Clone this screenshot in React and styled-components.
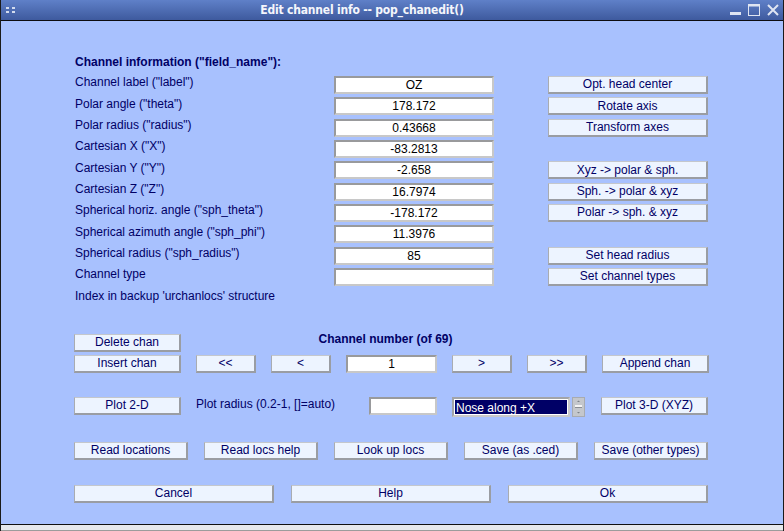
import styled, { createGlobalStyle } from 'styled-components';

const GlobalStyle = createGlobalStyle`
body {
    margin: 0;
    background: #a8c1fe;
    font-family: "Liberation Sans", Arial, sans-serif;
}
`;

const fields = [
    ['Channel label ("label")', 'OZ'],
    ['Polar angle ("theta")', '178.172'],
    ['Polar radius ("radius")', '0.43668'],
    ['Cartesian X ("X")', '-83.2813'],
    ['Cartesian Y ("Y")', '-2.658'],
    ['Cartesian Z ("Z")', '16.7974'],
    ['Spherical horiz. angle ("sph_theta")', '-178.172'],
    ['Spherical azimuth angle ("sph_phi")', '11.3976'],
    ['Spherical radius ("sph_radius")', '85'],
    ['Channel type', ''],
    ["Index in backup 'urchanlocs' structure", null],
];

// right column buttons, by row (null = empty row)
const sideButtons = [
    'Opt. head center', 'Rotate axis', 'Transform axes', null,
    'Xyz -> polar & sph.', 'Sph. -> polar & xyz', 'Polar -> sph. & xyz', null,
    'Set head radius', 'Set channel types', null,
];

const App = () => {
    return (
        <>
        <GlobalStyle />
        <Window>
            <TitleBar>
                <Grip>
                    <span /><span /><span /><span />
                </Grip>
                <Title>Edit channel info -- pop_chanedit()</Title>
                <WinControls>
                    <svg width="12" height="12" viewBox="0 0 12 12">
                        <rect x="1" y="8" width="11" height="3" fill="#dfe5f2" />
                    </svg>
                    <svg width="12" height="12" viewBox="0 0 12 12">
                        <rect x="0.5" y="0.5" width="11" height="11" fill="none" stroke="#dfe5f2" />
                        <rect x="0.5" y="0.5" width="11" height="2" fill="#dfe5f2" />
                    </svg>
                    <svg width="12" height="12" viewBox="0 0 12 12">
                        <path d="M1 1 L11 11 M11 1 L1 11" stroke="#dfe5f2" strokeWidth="2" />
                    </svg>
                </WinControls>
            </TitleBar>

            <Body>
                <InfoGrid>
                    <Header>Channel information ("field_name"):</Header>
                    {fields.map(([label, value], i) => (
                        <Row key={label}>
                            <Label>{label}</Label>
                            {value !== null ? <Edit value={value} readOnly /> : <span />}
                            <span />
                            {sideButtons[i] ? <Button>{sideButtons[i]}</Button> : <span />}
                        </Row>
                    ))}
                </InfoGrid>

                <NavGrid>
                    <Button>Delete chan</Button>
                    <NavTitle>Channel number (of 69)</NavTitle>
                    <span />
                    <Button>Insert chan</Button>
                    <Button>&lt;&lt;</Button>
                    <Button>&lt;</Button>
                    <Edit value="1" readOnly />
                    <Button>&gt;</Button>
                    <Button>&gt;&gt;</Button>
                    <Button>Append chan</Button>
                </NavGrid>

                <PlotRow>
                    <Button $w={107}>Plot 2-D</Button>
                    <PlotText>Plot radius (0.2-1, []=auto)</PlotText>
                    <Edit $w={68} value="" readOnly />
                    <Select>
                        <SelectBox>Nose along +X</SelectBox>
                        <Spinner>
                            <svg width="9" height="16" viewBox="0 0 9 16">
                                <path d="M3 3 L4.5 1.5 L6 3 Z" fill="#7d8288" />
                                <rect x="1" y="6" width="7" height="2" fill="#f4f4f4" />
                                <rect x="1" y="8" width="7" height="1" fill="#8a8e94" />
                                <path d="M3 13 L4.5 14.5 L6 13 Z" fill="#7d8288" />
                            </svg>
                        </Spinner>
                    </Select>
                    <Button $w={107}>Plot 3-D (XYZ)</Button>
                </PlotRow>

                <SpreadRow $mt={25}>
                    <Button $w={114}>Read locations</Button>
                    <Button $w={114}>Read locs help</Button>
                    <Button $w={114}>Look up locs</Button>
                    <Button $w={114}>Save (as .ced)</Button>
                    <Button $w={114}>Save (other types)</Button>
                </SpreadRow>

                <SpreadRow $mt={25}>
                    <Button $w={200}>Cancel</Button>
                    <Button $w={200}>Help</Button>
                    <Button $w={200}>Ok</Button>
                </SpreadRow>
            </Body>
            <Footer />
        </Window>
        </>
    );
};

export default App;

const Window = styled.div`
width: 784px;
height: 531px;
box-sizing: border-box;
border-left: 1px solid #1a1a1a;
border-right: 1px solid #1a1a1a;
display: flex;
flex-direction: column;
background: #a8c1fe;
overflow: hidden;
`;

const TitleBar = styled.div`
height: 20px;
flex-shrink: 0;
border-bottom: 1px solid #0c0c10;
background: linear-gradient(#5f80c8, #3e5a9e);
display: flex;
align-items: center;
padding: 0 4px 0 5px;
`;

const Grip = styled.div`
display: grid;
grid-template-columns: 3px 3px;
grid-template-rows: 2px 2px;
column-gap: 3px;
row-gap: 2px;
span {
    background: #d3dcee;
}
`;

const Title = styled.div`
flex: 1;
text-align: center;
color: #f4f6fb;
font-family: "DejaVu Sans Condensed", "DejaVu Sans", sans-serif;
font-size: 12px;
font-weight: bold;
padding-right: 20px;
letter-spacing: -0.2px;
`;

const WinControls = styled.div`
display: flex;
gap: 7px;
align-items: center;
`;

const Body = styled.div`
flex: 1;
padding: 32px 0 0 73px;
display: flex;
flex-direction: column;
color: #000066;
font-size: 12px;
`;

const InfoGrid = styled.div`
display: grid;
grid-auto-rows: 21.333px;
width: 634px;
`;

const Row = styled.div`
display: grid;
grid-template-columns: 260px 160px 54px 160px;
align-items: center;
`;

const Header = styled.div`
font-weight: bold;
align-self: center;
padding: 0 0 4px 1px;
`;

const Label = styled.div`
padding: 0 0 5px 1px;
white-space: nowrap;
`;

const Button = styled.div`
box-sizing: border-box;
height: 18px;
width: ${p => (p.$w ? `${p.$w}px` : 'auto')};
flex-shrink: 0;
background: #edf4ff;
border: 2px solid #9a9da3;
border-top: 1px solid #c4c7cc;
border-left: 1px solid #a9acb1;
color: #000066;
font-size: 12px;
display: flex;
align-items: center;
justify-content: center;
white-space: nowrap;
`;

const Edit = styled.input`
box-sizing: border-box;
height: 18px;
width: ${p => (p.$w ? `${p.$w}px` : '100%')};
flex-shrink: 0;
margin: 0;
padding: 0;
background: #fff;
border: 2px solid #c8c8c8;
border-top-color: #999a9c;
border-left-color: #999a9c;
font-family: "Liberation Sans", Arial, sans-serif;
font-size: 12px;
color: #000;
text-align: center;
outline: none;
`;

const NavGrid = styled.div`
margin-top: 25px;
display: grid;
grid-template-columns: 107px 60px 60px 91px 60px 60px 107px;
grid-template-rows: 18px 18px;
column-gap: 15px;
row-gap: 3px;
width: 635px;
`;

const NavTitle = styled.div`
grid-column: 2 / 7;
font-weight: bold;
text-align: center;
align-self: center;
padding: 0 12px 7px 0;
`;

const PlotRow = styled.div`
margin-top: 24px;
display: flex;
align-items: flex-start;
width: 634px;
`;

const PlotText = styled.div`
width: 174px;
margin-left: 15px;
padding-bottom: 4px;
line-height: 14px;
`;

const Select = styled.div`
display: flex;
margin: 0 16px 0 15px;
`;

const SelectBox = styled.div`
box-sizing: border-box;
width: 118px;
height: 20px;
border: 2px solid #c9c9c9;
border-top-color: #a2a4a8;
border-left-color: #a2a4a8;
background: #000066;
outline: 1px solid #fff;
outline-offset: -3px;
color: #fff;
font-size: 12px;
padding: 2px 0 0 2px;
white-space: nowrap;
`;

const Spinner = styled.div`
box-sizing: border-box;
width: 13px;
height: 20px;
margin-left: 2px;
background: #c4c7cc;
border: 1px solid #a8abb0;
display: flex;
align-items: center;
justify-content: center;
`;

const SpreadRow = styled.div`
margin-top: ${p => p.$mt}px;
display: flex;
justify-content: space-between;
width: 634px;
`;

const Footer = styled.div`
height: 5px;
flex-shrink: 0;
border-top: 1px solid #101010;
background: #e6e8ec;
border-bottom: 1px solid #9c9c9c;
`;
